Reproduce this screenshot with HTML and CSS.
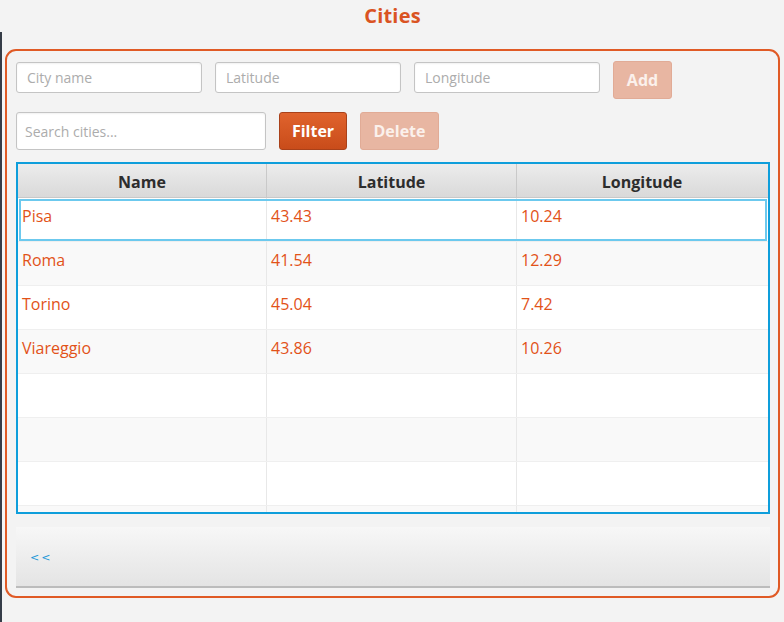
FILE: index.html
```html
<!DOCTYPE html>
<html>
<head>
<meta charset="utf-8">
<link rel="stylesheet" href="styles.css">
</head>
<body>
<div class="app">
  <h1 class="title">Cities</h1>
  <div class="panel">
    <div class="row row-add">
      <input class="field" type="text" placeholder="City name">
      <input class="field" type="text" placeholder="Latitude">
      <input class="field" type="text" placeholder="Longitude">
      <button class="btn btn-disabled btn-add">Add</button>
    </div>
    <div class="row row-filter">
      <input class="field field-search" type="text" placeholder="Search cities...">
      <button class="btn btn-filter">Filter</button>
      <button class="btn btn-disabled btn-delete">Delete</button>
    </div>
    <div class="table">
      <div class="thead">
        <div class="th">Name</div>
        <div class="th">Latitude</div>
        <div class="th last">Longitude</div>
      </div>
      <div class="tbody">
        <div class="tr selected"><div class="td">Pisa</div><div class="td">43.43</div><div class="td last">10.24</div></div>
        <div class="tr alt"><div class="td">Roma</div><div class="td">41.54</div><div class="td last">12.29</div></div>
        <div class="tr"><div class="td">Torino</div><div class="td">45.04</div><div class="td last">7.42</div></div>
        <div class="tr alt"><div class="td">Viareggio</div><div class="td">43.86</div><div class="td last">10.26</div></div>
        <div class="tr"><div class="td"></div><div class="td"></div><div class="td last"></div></div>
        <div class="tr alt"><div class="td"></div><div class="td"></div><div class="td last"></div></div>
        <div class="tr"><div class="td"></div><div class="td"></div><div class="td last"></div></div>
        <div class="tr alt"><div class="td"></div><div class="td"></div><div class="td last"></div></div>
      </div>
    </div>
    <div class="pager"><span class="prev">&lt;&lt;</span></div>
  </div>
</div>
</body>
</html>
```
FILE: styles.css
```css
html, body {
  margin: 0;
  padding: 0;
  height: 100%;
}
body {
  background-color: #f3f3f3;
  background-image: linear-gradient(#353c47, #353c47);
  background-size: 2px calc(100% - 32px);
  background-position: 0 32px;
  background-repeat: no-repeat;
  font-family: "Open Sans", "Noto Sans", sans-serif;
  overflow: hidden;
}
.app {
  display: flex;
  flex-direction: column;
  padding: 0 4px 0 5px;
}
.title {
  margin: 0;
  height: 49px;
  box-sizing: border-box;
  padding-top: 2px;
  text-align: center;
  font-size: 20px;
  font-weight: 700;
  line-height: 28px;
  color: #da5322;
  letter-spacing: 0.2px;
}
.panel {
  border: 2px solid #e05a25;
  border-radius: 11px;
  height: 549px;
  box-sizing: border-box;
  padding: 10px 8px 0 9px;
  display: flex;
  flex-direction: column;
}
.row {
  display: flex;
  align-items: flex-start;
  gap: 13px;
}
.row-add {
  height: 51px;
}
.row-filter {
  height: 50px;
}
.field {
  box-sizing: border-box;
  width: 186px;
  height: 31px;
  margin-top: 1px;
  border: 1px solid #c4c4c4;
  border-radius: 3px;
  background: #fff;
  box-shadow: inset 0 1px 2px rgba(0,0,0,0.06);
  padding: 0 10px;
  font-family: "Open Sans", "Noto Sans", sans-serif;
  font-size: 14px;
  color: #333;
  outline: none;
}
.field::placeholder {
  color: #acacac;
}
.field-search {
  width: 250px;
  height: 38px;
  margin-top: 0;
  padding: 0 8px;
}
.btn {
  box-sizing: border-box;
  height: 38px;
  border-radius: 3px;
  font-family: "Open Sans", "Noto Sans", sans-serif;
  font-size: 16px;
  font-weight: 700;
  color: #fff;
  padding: 0;
  cursor: default;
}
.btn-add {
  width: 59px;
}
.btn-filter {
  width: 68px;
  background: linear-gradient(#e0632d, #c94c1a);
  border: 1px solid #a9411a;
}
.btn-delete {
  width: 79px;
}
.btn-disabled {
  background: #e8b6a2;
  border: 1px solid #e1ab96;
  color: #fbf1ec;
}
.table {
  border: 2px solid #0e9edb;
  height: 352px;
  box-sizing: border-box;
  background: #fff;
  overflow: hidden;
  display: flex;
  flex-direction: column;
}
.thead {
  display: grid;
  grid-template-columns: 249px 250px 1fr;
  height: 34px;
  flex: none;
  background: linear-gradient(#ececec, #d9d9d9);
  border-bottom: 1px solid #c8c8c8;
  box-sizing: border-box;
}
.th {
  display: flex;
  align-items: center;
  justify-content: center;
  font-size: 16px;
  font-weight: 700;
  color: #2d2d2d;
  border-right: 1px solid #c9c9c9;
  padding-top: 2px;
}
.th.last {
  border-right: none;
  margin-right: 1px;
}
.tbody {
  display: flex;
  flex-direction: column;
}
.tr {
  display: grid;
  grid-template-columns: 249px 250px 1fr;
  height: 44px;
  flex: none;
  box-sizing: border-box;
  background: #fff;
  border-bottom: 1px solid #efefef;
}
.tr.alt {
  background: #f9f9f9;
}
.tr.selected {
  outline: 2px solid #6cc9ee;
  outline-offset: -3px;
}
.td {
  border-right: 1px solid #e8e8e8;
  padding: 7px 0 0 4px;
  font-size: 16px;
  color: #e25218;
  line-height: 22px;
}
.td.last {
  border-right: none;
}
.pager {
  margin-top: 13px;
  height: 61px;
  box-sizing: border-box;
  background: linear-gradient(#f7f7f7, #e4e4e4);
  border-bottom: 2px solid #bcbcbc;
  display: flex;
  align-items: center;
  padding-left: 14px;
  padding-top: 1px;
}
.prev {
  color: #1a98d8;
  font-size: 11px;
  letter-spacing: 2px;
  font-family: "DejaVu Sans", sans-serif;
}
```
